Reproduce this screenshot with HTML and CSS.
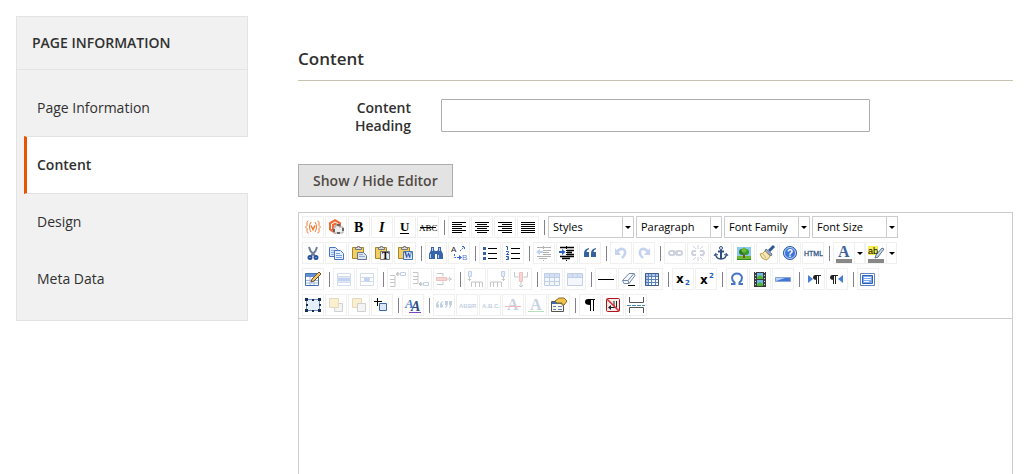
FILE: index.html
```html
<!DOCTYPE html>
<html lang="en">
<head>
    <meta charset="UTF-8">
    <meta name="viewport" content="width=device-width, initial-scale=1.0">
    <title>Page Information</title>
    <link rel="stylesheet" href="styles.css">
</head>
<body>

    <nav class="side">
        <h2 class="side-title">Page Information</h2>
        <ul class="side-list">
            <li><a class="side-link" href="#info">Page Information</a></li>
            <li><a class="side-link active" href="#content">Content</a></li>
            <li><a class="side-link" href="#design">Design</a></li>
            <li><a class="side-link" href="#meta">Meta Data</a></li>
        </ul>
    </nav>

    <main class="main" id="content">
        <h1 class="section-title">Content</h1>

        <div class="field">
            <label for="heading">Content Heading</label>
            <input type="text" id="heading" name="heading">
        </div>

        <button type="button" class="toggle">Show / Hide Editor</button>

        <div class="editor">
            <div class="toolbar">

                <!-- Row 1: text style, alignment, drop-downs -->
                <div class="row">
                    <button type="button" class="btn" title="Insert Variable"><svg viewBox="0 0 20 20" fill="none" stroke="#ee7a32"><path d="M5.500 4Q4 4 4 5.500v3L2.500 10 4 11.500v3Q4 16 5.500 16M14.500 4Q16 4 16 5.500v3l1.500 1.500-1.500 1.500v3q0 1.500-1.500 1.500M8 5Q6.500 7 6.500 10T8 15M12 5q1.500 2 1.500 5T12 15"/><path d="M8 8.500l2 4 2-4" stroke-width="1.500"/></svg></button>
                    <button type="button" class="btn" title="Insert Widget"><svg viewBox="0 0 20 20"><path d="M9 2l6 3.500v7L9 17l-6-4V5.500z" fill="#ee6a37"/><path d="M5.500 12V7L9 5l3.500 2M9 8v5" stroke="#fff" fill="none"/><path d="M8 10h2V8h3v2h4v6H8z" fill="#eee" stroke="#aaa"/><path d="M11 7h3v2h-3zM7 12h2v3H7zM16 11h2v3h-2zM11 15h3v2h-3z" fill="#6a6464"/></svg></button>
                    <button type="button" class="btn" title="Bold"><svg viewBox="0 0 20 20"><text class="serif" x="5" y="15" font-size="14" font-weight="bold">B</text></svg></button>
                    <button type="button" class="btn" title="Italic"><svg viewBox="0 0 20 20"><text class="serif" x="7" y="15" font-size="14" font-weight="bold" font-style="italic">I</text></svg></button>
                    <button type="button" class="btn" title="Underline"><svg viewBox="0 0 20 20"><text class="serif" x="5" y="14" font-size="13" font-weight="bold">U</text><path d="M5 16.500h9" stroke="#000"/></svg></button>
                    <button type="button" class="btn" title="Strikethrough"><svg viewBox="0 0 20 20"><text class="serif" x="1" y="14" font-size="9">ABC</text><path d="M2 10.500h16" stroke="#000"/></svg></button>
                    <span class="sep"></span>
                    <button type="button" class="btn" title="Align Left"><svg viewBox="0 0 20 20"><path d="M3 5.500h14M3 7.500h10M3 9.500h14M3 11.500h10M3 13.500h14M3 15.500h10" stroke="#000"/></svg></button>
                    <button type="button" class="btn" title="Align Center"><svg viewBox="0 0 20 20"><path d="M3 5.500h14M5 7.500h10M3 9.500h14M5 11.500h10M3 13.500h14M5 15.500h10" stroke="#000"/></svg></button>
                    <button type="button" class="btn" title="Align Right"><svg viewBox="0 0 20 20"><path d="M3 5.500h14M7 7.500h10M3 9.500h14M7 11.500h10M3 13.500h14M7 15.500h10" stroke="#000"/></svg></button>
                    <button type="button" class="btn" title="Align Full"><svg viewBox="0 0 20 20"><path d="M3 5.500h14M3 7.500h14M3 9.500h14M3 11.500h14M3 13.500h14M3 15.500h14" stroke="#000"/></svg></button>
                    <span class="sep"></span>
                    <label class="listbox"><select aria-label="Styles"><option>Styles</option></select><span class="arrow"></span></label>
                    <label class="listbox"><select aria-label="Paragraph"><option>Paragraph</option></select><span class="arrow"></span></label>
                    <label class="listbox"><select aria-label="Font Family"><option>Font Family</option></select><span class="arrow"></span></label>
                    <label class="listbox"><select aria-label="Font Size"><option>Font Size</option></select><span class="arrow"></span></label>
                </div>

                <!-- Row 2: clipboard, lists, links, colors -->
                <div class="row">
                    <button type="button" class="btn" title="Cut"><svg viewBox="0 0 20 20" fill="none"><path d="M6 4l1.500 4L12 13M14 4l-1.500 4L8 13" stroke="#6d7f99" stroke-width="2"/><circle cx="7" cy="14.500" r="1.500" stroke="#24509c" stroke-width="2"/><circle cx="13" cy="14.500" r="1.500" stroke="#24509c" stroke-width="2"/></svg></button>
                    <button type="button" class="btn" title="Copy"><svg viewBox="0 0 20 20" stroke="#4a74c4"><path d="M3.500 4.500h6l2 2v7h-8z" fill="#dce9fc"/><path d="M5 7.500h5M5 9.500h5M5 11.500h3" stroke="#8fb0e6"/><path d="M8.500 7.500h6l3 3v6h-9z" fill="#e8f1ff"/><path d="M10 10.500h4M10 12.500h6M10 14.500h6" stroke="#7aa0e0"/></svg></button>
                    <button type="button" class="btn" title="Paste"><svg viewBox="0 0 20 20"><path d="M3.500 4.500h11v11h-11z" fill="#f2cf63" stroke="#a98328"/><path d="M6.500 6.500v-2h2v-1h2v1h2v2z" fill="#ddd" stroke="#777"/><path d="M8.500 9.500h6l3 3v4h-9z" fill="#dce5f3" stroke="#64758f"/><path d="M10 11.500h4M10 13.500h6" stroke="#98a9c4"/></svg></button>
                    <button type="button" class="btn" title="Paste as Plain Text"><svg viewBox="0 0 20 20"><path d="M3.500 4.500h11v11h-11z" fill="#f2cf63" stroke="#a98328"/><path d="M6.500 6.500v-2h2v-1h2v1h2v2z" fill="#ddd" stroke="#777"/><path d="M8.500 8.500h9v8h-9z" fill="#eee" stroke="#777"/><text class="serif" x="10" y="16" font-size="10" font-weight="bold">T</text></svg></button>
                    <button type="button" class="btn" title="Paste from Word"><svg viewBox="0 0 20 20"><path d="M3.500 4.500h11v11h-11z" fill="#f2cf63" stroke="#a98328"/><path d="M6.500 6.500v-2h2v-1h2v1h2v2z" fill="#ddd" stroke="#777"/><path d="M8.500 8.500h9v8h-9z" fill="#dbe8fb" stroke="#4a74b4"/><text class="serif" x="9" y="15" font-size="8" font-weight="bold" fill="#1d4fa4">W</text></svg></button>
                    <span class="sep"></span>
                    <button type="button" class="btn" title="Find"><svg viewBox="0 0 20 20"><path d="M5 4h3v3l1 1h2l1-1V4h3v3l2 4v5h-6v-5H9v5H3v-5l2-4z" fill="#3765ac"/><path d="M4.500 11v4M6.500 5v3M12.500 12v3M13.500 5v3" stroke="#b9d2f7"/></svg></button>
                    <button type="button" class="btn" title="Replace"><svg viewBox="0 0 20 20"><text class="sans" x="2" y="9" font-size="8" fill="#222">A</text><text class="sans" x="13" y="17" font-size="8" fill="#5a86e0">B</text><path d="M5.500 11v3.500H10M11 8l4-4M13 3.500h2.500V6" fill="none" stroke="#3568d8" stroke-dasharray="2 1"/><path d="M10 12l3 2.500-3 2.500z" fill="#3568d8"/></svg></button>
                    <span class="sep"></span>
                    <button type="button" class="btn" title="Unordered List"><svg viewBox="0 0 20 20"><path d="M8 5.500h9M8 10.500h9M8 15.500h9" stroke="#000"/><path d="M3 4h3v3H3zM3 9h3v3H3zM3 14h3v3H3z" fill="#3a5f9f"/></svg></button>
                    <button type="button" class="btn" title="Ordered List"><svg viewBox="0 0 20 20"><path d="M8 5.500h9M8 10.500h9M8 15.500h9" stroke="#000"/><path d="M3 3.500h1.500V7M3 8.500h2.500v1L3.500 11.500H6M3 13.500h2.500v3H3M4 15h2" fill="none" stroke="#2a5ab8"/></svg></button>
                    <span class="sep"></span>
                    <button type="button" class="btn off" title="Outdent" disabled><svg viewBox="0 0 20 20"><path d="M3 4.500h14M10 7.500h7M10 9.500h5M10 11.500h7M3 13.500h14M5 15.500h8" stroke="#000"/><path d="M9.500 3v15" stroke="#000" stroke-dasharray="1 1"/><path d="M2 9l4-3v2h3v2H6v2z" fill="#3068d0"/></svg></button>
                    <button type="button" class="btn" title="Indent"><svg viewBox="0 0 20 20"><path d="M3 4.500h14M10 7.500h7M10 9.500h5M10 11.500h7M3 13.500h14M5 15.500h8" stroke="#000" stroke-width="1.500"/><path d="M9.500 3v15" stroke="#000" stroke-dasharray="1 1"/><path d="M8.500 9L5 6v2H2v2h3v2z" fill="#2a62c8"/></svg></button>
                    <button type="button" class="btn" title="Blockquote"><svg viewBox="0 0 20 20"><path d="M9 6Q6.500 7 6.500 9H9v5H4v-4Q4 6 9 5zM16 6q-2.500 1-2.500 3H16v5h-5v-4q0-4 5-5z" fill="#35639f"/></svg></button>
                    <span class="sep"></span>
                    <button type="button" class="btn off" title="Undo" disabled><svg viewBox="0 0 20 20"><path d="M6 9q3-4.500 7-2.500 3 4-2 8.500" fill="none" stroke="#3c70cf" stroke-width="2.500"/><path d="M4 5v7h6z" fill="#3c70cf"/></svg></button>
                    <button type="button" class="btn off" title="Redo" disabled><svg viewBox="0 0 20 20"><path d="M14 9Q11 4.500 7 6.500 4 10.500 9 15" fill="none" stroke="#3c70cf" stroke-width="2.500"/><path d="M16 5v7h-6z" fill="#3c70cf"/></svg></button>
                    <span class="sep"></span>
                    <button type="button" class="btn off" title="Insert Link" disabled><svg viewBox="0 0 20 20" fill="none" stroke="#5b6d94" stroke-width="2"><rect x="4" y="8" width="6" height="4" rx="2"/><rect x="11" y="8" width="6" height="4" rx="2"/><path d="M8 10h5"/></svg></button>
                    <button type="button" class="btn off" title="Unlink" disabled><svg viewBox="0 0 20 20" fill="none" stroke="#5b6d94"><path d="M8 8H5q-2 2 0 4h3M12 8h3q2 2 0 4h-3" stroke-width="2"/><path d="M10 2v4M10 14v4M5 3l3 3M15 3l-3 3M5 17l3-3M15 17l-3-3"/></svg></button>
                    <button type="button" class="btn" title="Anchor"><svg viewBox="0 0 20 20" fill="none" stroke="#304f80"><circle cx="10" cy="5" r="1.500"/><path d="M10 7v9M7 8.500h6" stroke-width="2"/><path d="M4.500 11q.5 5 5.500 5t5.500-5" stroke-width="1.500"/><path d="M3 13l1.500-2.500L7 12M17 13l-1.500-2.500L13 12"/></svg></button>
                    <button type="button" class="btn" title="Insert Image"><svg viewBox="0 0 20 20"><path d="M3 4h14v9H3z" fill="#8cc8f5"/><path d="M3 13h14v3H3z" fill="#69b82f"/><path d="M9 10h2v5H9z" fill="#805020"/><circle cx="8" cy="9" r="3" fill="#2f7d20"/><circle cx="12" cy="9" r="3" fill="#3b9a28"/><circle cx="10" cy="7" r="2.500" fill="#6bbd3b"/><path d="M3 16.500h14" stroke="#338b22"/></svg></button>
                    <button type="button" class="btn" title="Cleanup"><svg viewBox="0 0 20 20"><path d="M17 3l-5 5" stroke="#31579b" stroke-width="3"/><path d="M9 6l6 5-1 2-6-5z" fill="#9db2d4" stroke="#61769a"/><path d="M8 8l5 5q-1 3-4 4-5-1-6-6 3 0 5-3z" fill="#f6e6b4" stroke="#b99c4b"/><path d="M6 11l3 4" stroke="#d0b56c"/></svg></button>
                    <button type="button" class="btn" title="Help"><svg viewBox="0 0 20 20"><circle cx="10" cy="10" r="6.500" fill="#3d76d8" stroke="#2a58a8"/><circle cx="10" cy="10" r="5.500" fill="none" stroke="#bcd4fa"/><text class="sans" x="7" y="14" font-size="10" font-weight="bold" fill="#fff">?</text></svg></button>
                    <button type="button" class="btn" title="Edit HTML Source"><svg viewBox="0 0 20 20"><text class="sans" x="1" y="13" font-size="7" fill="#31588c" stroke="#31588c" stroke-width=".3">HTML</text></svg></button>
                    <span class="sep"></span>
                    <span class="split">
                        <button type="button" class="btn" title="Text Color"><svg viewBox="0 0 20 20"><text class="serif" x="4" y="14" font-size="16" font-weight="bold" fill="#3c629c">A</text><path d="M2 16h16v4H2z" fill="#888"/></svg></button>
                        <button type="button" class="arrow" title="Choose Text Color"></button>
                    </span>
                    <span class="split">
                        <button type="button" class="btn" title="Background Color"><svg viewBox="0 0 20 20"><path d="M2 3h10v9H2z" fill="#f7ee55"/><path d="M16 5l2 1-6 8-3 1 1-3z" fill="#cbd8ea" stroke="#5a7396"/><text class="sans" x="2" y="11" font-size="9">ab</text><path d="M2 16h16v4H2z" fill="#888"/></svg></button>
                        <button type="button" class="arrow" title="Choose Background Color"></button>
                    </span>
                </div>

                <!-- Row 3: tables, symbols, direction -->
                <div class="row">
                    <button type="button" class="btn" title="Insert Table"><svg viewBox="0 0 20 20"><path d="M2.500 4.500h13v12h-13z" fill="#fff" stroke="#4670b0"/><path d="M3 5h12v3H3z" fill="#648fd2"/><path d="M3 11.500h12M3 14h12M7 8v8M11 8v8" stroke="#9db8e2"/><path d="M16 3l2 2-7 7-3 1 1-3z" fill="#f0c56a" stroke="#765028"/></svg></button>
                    <span class="sep"></span>
                    <button type="button" class="btn off" title="Row Properties" disabled><svg viewBox="0 0 20 20" fill="none" stroke="#6e8fc8"><path d="M3.500 4.500h13v12h-13zM3 7.500h14M3 13.500h14"/><path d="M4 10.500h12" stroke="#3a6ed0" stroke-width="4"/></svg></button>
                    <button type="button" class="btn off" title="Cell Properties" disabled><svg viewBox="0 0 20 20" fill="none" stroke="#6e8fc8"><path d="M3.500 4.500h13v12h-13zM3 8.500h14M3 12.500h14M7.500 8v5M12.500 8v5"/><path d="M8 9h4v3H8z" fill="#3a6ed0" stroke="#3a6ed0"/></svg></button>
                    <span class="sep"></span>
                    <button type="button" class="btn off" title="Insert Row Before" disabled><svg viewBox="0 0 20 20" fill="none" stroke="#444"><path d="M2 6.500h5v4H2M2 10.500h5v3H2M2 13.500h5v4H2M8 5h4"/><path d="M12.500 3.500h5v3h-5z" stroke="#3568b8"/><path d="M8 5l2-2v4z" fill="#444"/></svg></button>
                    <button type="button" class="btn off" title="Insert Row After" disabled><svg viewBox="0 0 20 20" fill="none" stroke="#444"><path d="M2 3.500h5v4H2M2 7.500h5v3H2M2 10.500h5v4H2M8 15h4"/><path d="M12.500 13.500h5v3h-5z" stroke="#3568b8"/><path d="M8 15l2-2v4z" fill="#444"/></svg></button>
                    <button type="button" class="btn off" title="Delete Row" disabled><svg viewBox="0 0 20 20" fill="none" stroke="#444"><path d="M3 4.500h6v3M3 15.500h6v-3M12 10h6M15 8l2 2-2 2"/><path d="M2.500 8.500h10v3h-10z" fill="#f07878" stroke="#c33"/></svg></button>
                    <span class="sep"></span>
                    <button type="button" class="btn off" title="Insert Column Before" disabled><svg viewBox="0 0 20 20" fill="none" stroke="#444"><path d="M6.500 18v-5h11v5M10.500 13v5M14.500 13v5M4.500 8v4M3 10.500h3"/><path d="M3.500 2.500h3v5h-3z" fill="#aac6f2" stroke="#3568b8"/></svg></button>
                    <button type="button" class="btn off" title="Insert Column After" disabled><svg viewBox="0 0 20 20" fill="none" stroke="#444"><path d="M2.500 18v-5h11v5M5.500 13v5M9.500 13v5M15.500 8v4M14 10.500h3"/><path d="M13.500 2.500h3v5h-3z" fill="#aac6f2" stroke="#3568b8"/></svg></button>
                    <button type="button" class="btn off" title="Delete Column" disabled><svg viewBox="0 0 20 20" fill="none" stroke="#444"><path d="M3.500 3v5h4M16.500 3v5h-4M10 13v5M8 16l2 2 2-2"/><path d="M8.500 3.500h3v9h-3z" fill="#f07878" stroke="#c33"/></svg></button>
                    <span class="sep"></span>
                    <button type="button" class="btn off" title="Split Cells" disabled><svg viewBox="0 0 20 20"><path d="M2.500 4.500h15v12h-15z" fill="#dce8fb" stroke="#3865ad"/><path d="M3 5h14v3H3z" fill="#6f98dc"/><path d="M3 8.500h14M3 12.500h14M7.500 5v11M12.500 5v11" stroke="#3865ad"/></svg></button>
                    <button type="button" class="btn off" title="Merge Cells" disabled><svg viewBox="0 0 20 20"><path d="M2.500 4.500h15v12h-15z" fill="#dce8fb" stroke="#3865ad"/><path d="M3 5h14v3H3z" fill="#6f98dc"/><path d="M3 8.500h14M7.500 5v3M12.500 5v3" stroke="#3865ad"/></svg></button>
                    <span class="sep"></span>
                    <button type="button" class="btn" title="Horizontal Line"><svg viewBox="0 0 20 20"><path d="M2 10.500h16" stroke="#000"/></svg></button>
                    <button type="button" class="btn" title="Remove Formatting"><svg viewBox="0 0 20 20"><path d="M10 4.500h5l1 2-6 8H5l-1.500-3z" fill="#f5f8ff" stroke="#7186ad"/><path d="M4 11.500h5l6-7M9 11.500l1 3" fill="none" stroke="#7186ad"/><path d="M9 16.500h7" stroke="#000"/></svg></button>
                    <button type="button" class="btn" title="Toggle Guidelines"><svg viewBox="0 0 20 20"><path d="M3 4h14v13H3z" fill="#f4f8ff"/><path d="M3 4h14v3H3zM3 4h3v13H3z" fill="#a9c3ec"/><path d="M6.500 4v13M9.500 4v13M13.500 4v13M3 7.500h14M3 10.500h14M3 13.500h14" stroke="#5c80ba"/><path d="M3.500 4.500h13v12h-13z" fill="none" stroke="#3d5a8c"/></svg></button>
                    <span class="sep"></span>
                    <button type="button" class="btn" title="Subscript"><svg viewBox="0 0 20 20"><text class="dejavu" x="3" y="14" font-size="12" font-weight="bold">x</text><text class="dejavu" x="12" y="16" font-size="7" font-weight="bold" fill="#2a5cb8">2</text></svg></button>
                    <button type="button" class="btn" title="Superscript"><svg viewBox="0 0 20 20"><text class="dejavu" x="4" y="15" font-size="12" font-weight="bold">x</text><text class="dejavu" x="13" y="9" font-size="7" font-weight="bold" fill="#2a5cb8">2</text></svg></button>
                    <span class="sep"></span>
                    <button type="button" class="btn" title="Insert Custom Character"><svg viewBox="0 0 20 20"><path d="M4 15h3.500v-1.500Q5 11.500 5 8.500 6 4.500 10 4.500T15 8.500q0 3-2.500 5V15H16" fill="none" stroke="#4676cb" stroke-width="2"/></svg></button>
                    <button type="button" class="btn" title="Insert Media"><svg viewBox="0 0 20 20"><path d="M4 3h12v15H4z" fill="#3b3b3b"/><path d="M7 4h6v6H7zM7 11h6v6H7z" fill="#6fb8e9"/><path d="M7 8l3-2 3 2v2H7zM7 15l3-2 3 2v2H7z" fill="#4eb535"/><path d="M5.500 3v15M14.500 3v15" stroke="#ddd" stroke-dasharray="1 2"/></svg></button>
                    <button type="button" class="btn" title="Insert Horizontal Rule"><svg viewBox="0 0 20 20"><path d="M2.500 8.500h15v4h-15z" fill="#4478d4" stroke="#8ba6d4"/><path d="M3 12l9-3H3z" fill="#b5d0ff"/></svg></button>
                    <span class="sep"></span>
                    <button type="button" class="btn" title="Left to Right"><svg viewBox="0 0 20 20"><path d="M4 6l5 4-5 4z" fill="#477dd4"/><path d="M13 6h-2Q9 6 9 8.500t4 2.500z" fill="#222"/><path d="M12.500 6v9M14.500 6v9M11 6.500h6" stroke="#222"/></svg></button>
                    <button type="button" class="btn" title="Right to Left"><svg viewBox="0 0 20 20"><path d="M16 6l-5 4 5 4z" fill="#477dd4"/><path d="M7 6H5Q3 6 3 8.500T7 11z" fill="#222"/><path d="M6.500 6v9M8.500 6v9M5 6.500h6" stroke="#222"/></svg></button>
                    <span class="sep"></span>
                    <button type="button" class="btn" title="Fullscreen"><svg viewBox="0 0 20 20"><path d="M2.500 4.500h14v12h-14z" fill="#fff" stroke="#5c83c8"/><path d="M4.500 6.500h10v8h-10z" fill="#7ba7ef" stroke="#2f61b5"/><path d="M6 8.500h7M6 10.500h7M6 12.500h5" stroke="#fff"/></svg></button>
                </div>

                <!-- Row 4: layers, semantic markup, page break -->
                <div class="row">
                    <button type="button" class="btn" title="Insert Layer"><svg viewBox="0 0 20 20"><path d="M3.500 4.500h13v11h-13z" fill="#e4edfa" stroke="#6d8fc4"/><path d="M2 3h3v3H2zM9 4h2v2H9zM15 3h3v3h-3zM3 9h2v2H3zM16 9h2v2h-2zM2 14h3v3H2zM9 15h2v2H9zM15 14h3v3h-3z" fill="#182c4c"/></svg></button>
                    <button type="button" class="btn off" title="Move Forward" disabled><svg viewBox="0 0 20 20"><path d="M8.500 8.500h8v8h-8z" fill="#ddd" stroke="#666"/><path d="M3.500 3.500h9v9h-9z" fill="#f1cd62" stroke="#a98328"/></svg></button>
                    <button type="button" class="btn off" title="Move Backward" disabled><svg viewBox="0 0 20 20"><path d="M3.500 3.500h9v9h-9z" fill="#f1cd62" stroke="#a98328"/><path d="M8.500 8.500h8v8h-8z" fill="#ddd" stroke="#666"/></svg></button>
                    <button type="button" class="btn" title="Toggle Absolute Positioning"><svg viewBox="0 0 20 20"><path d="M7.500 8.500h7v7h-7z" fill="#dce8fa" stroke="#3c69ae"/><path d="M2 6.500h8M5.500 3v8" stroke="#000"/></svg></button>
                    <span class="sep"></span>
                    <button type="button" class="btn" title="Edit CSS Style"><svg viewBox="0 0 20 20"><text class="serif" x="2" y="13" font-size="13" font-weight="bold" font-style="italic" fill="#477bca">A</text><text class="serif" x="8" y="16" font-size="14" font-weight="bold" font-style="italic" fill="#304c82">A</text><path d="M6 17.500h12" stroke="#7b45c0"/></svg></button>
                    <span class="sep"></span>
                    <button type="button" class="btn off" title="Citation" disabled><svg viewBox="0 0 20 20" fill="#35639f"><path d="M5 7Q3.500 8 4 9.500h1v3H2V9q.5-2 3-3zM9 7Q7.500 8 8 9.500h1v3H6V9q.5-2 3-3zM11 6h3v3q-.5 3-3 4v-1q1.500-1 1-2h-1zM15 6h3v3q-.5 3-3 4v-1q1.500-1 1-2h-1z"/></svg></button>
                    <button type="button" class="btn off" title="Abbreviation" disabled><svg viewBox="0 0 20 20"><text class="sans" x="2" y="13" font-size="6" font-weight="bold" fill="#35639f">ABBR</text></svg></button>
                    <button type="button" class="btn off" title="Acronym" disabled><svg viewBox="0 0 20 20"><text class="sans" x="2" y="13" font-size="6" font-weight="bold" fill="#35639f">A.B.C.</text></svg></button>
                    <button type="button" class="btn off" title="Deletion" disabled><svg viewBox="0 0 20 20"><text class="serif" x="4" y="15" font-size="16" font-weight="bold" fill="#4a6c9f">A</text><path d="M2 11.500h16" stroke="#e02020"/></svg></button>
                    <button type="button" class="btn off" title="Insertion" disabled><svg viewBox="0 0 20 20"><text class="serif" x="4" y="15" font-size="16" font-weight="bold" fill="#4a6c9f">A</text><path d="M2 16.500h16" stroke="#159a25"/></svg></button>
                    <button type="button" class="btn" title="Insert/Edit Attributes"><svg viewBox="0 0 20 20"><path d="M2.500 6.500h12v10h-12z" fill="#f8f8f3" stroke="#555"/><path d="M3 8h11" stroke="#416db5" stroke-width="2"/><path d="M4 11.500h3M9 11.500h4M4 14.500h3M9 14.500h4" stroke="#6585b0"/><path d="M6 6l4-3h5l3 3-3 4h-2V8H8z" fill="#f0c34b" stroke="#8f681f"/></svg></button>
                    <span class="sep"></span>
                    <button type="button" class="btn" title="Show Invisible Characters"><svg viewBox="0 0 20 20"><path d="M11 4H8Q5 4 5 7t5 3z" fill="#000"/><path d="M10.500 4v12M13.500 4v12M8 4.500h7" stroke="#000"/></svg></button>
                    <button type="button" class="btn" title="Insert Non-Breaking Space"><svg viewBox="0 0 20 20"><rect x="3.500" y="3.500" width="13" height="13" rx="1" fill="#f1ecec" stroke="#b3141b"/><path d="M7 12.500h6.500V6M11 6v5" fill="none" stroke="#222"/><path d="M5 12.500L8 10v5z" fill="#222"/><path d="M4 4l12 12" stroke="#dc2c33" stroke-width="1.500"/></svg></button>
                    <button type="button" class="btn" title="Insert Page Break"><svg viewBox="0 0 20 20" fill="none" stroke="#555"><path d="M3.500 2v5.500h14V2M3.500 18v-5.500h14V18"/><path d="M1 10.500h18" stroke="#4c8cae" stroke-dasharray="4 1"/></svg></button>
                </div>
            </div>
            <textarea class="editor-text" aria-label="Content"></textarea>
        </div>
    </main>

</body>
</html>
```
FILE: styles.css
```css
* {
    box-sizing: border-box;
}
body {
    display: flex;
    gap: 50px;
    min-height: 100vh;
    margin: 0;
    padding: 16px 13px 0 16px;
    font-family: "Open Sans", sans-serif;
    font-size: 14px;
    line-height: 18px;
    color: #303030;
    background-color: #ffffff;
}

/* Left navigation */
.side {
    flex: none;
    align-self: flex-start;
    width: 232px;
    border: 1px solid #e3e3e3;
    background-color: #f1f1f1;
}
.side-title {
    margin: 0;
    padding: 17px 15px;
    border-bottom: 1px solid #e3e3e3;
    font-size: 14px;
    font-weight: 600;
    text-transform: uppercase;
}
.side-list {
    list-style: none;
    margin: 0;
    padding: 9px 0 13px 7px;
}
.side-link {
    display: block;
    padding: 20px 10px 19px;
    border-left: 3px solid transparent;
    color: #303030;
    text-decoration: none;
}
.side-link.active {
    margin: 0 -1px -1px 0;
    padding-top: 19px;
    border-top: 1px solid #e3e3e3;
    border-bottom: 1px solid #e3e3e3;
    border-left-color: #eb5202;
    background-color: #ffffff;
    font-weight: 600;
}

/* Content section */
.main {
    display: flex;
    flex: 1;
    flex-direction: column;
    align-items: flex-start;
    min-width: 0;
}
.section-title {
    width: 100%;
    margin: 0 0 18px;
    padding: 31px 0 10px;
    border-bottom: 1px solid #cac3b4;
    font-size: 17px;
    font-weight: 600;
    line-height: 23px;
}
.field {
    display: grid;
    grid-template-columns: 113px 60%;
    gap: 30px;
    width: 100%;
    margin-bottom: 29px;
}
.field label {
    padding-left: 40px;
    font-weight: 600;
    text-align: right;
}
.field input {
    height: 33px;
    padding: 0 10px;
    border: 1px solid #adadad;
    border-radius: 1px;
    font: inherit;
}
.toggle {
    height: 33px;
    margin-bottom: 15px;
    padding: 0 14px;
    border: 1px solid #adadad;
    background-color: #e3e3e3;
    color: #514943;
    font: inherit;
    font-weight: 600;
}

/* Editor */
.editor {
    display: flex;
    flex: 1;
    flex-direction: column;
    width: 100%;
    border: 1px solid #cccccc;
    border-bottom: none;
}
.toolbar {
    padding: 3px 3px 2px;
    border-bottom: 1px solid #cccccc;
}
.row {
    display: flex;
    height: 22px;
    margin-bottom: 4px;
}
.row:last-child {
    margin-bottom: 0;
}
.btn {
    flex: none;
    width: 22px;
    height: 22px;
    margin-right: 1px;
    padding: 0;
    border: 1px solid #f0f0ee;
    background: none;
}
.btn svg {
    display: block;
    width: 20px;
    height: 20px;
}
.off svg {
    opacity: 0.3;
}
.serif {
    font-family: "Liberation Serif", serif;
}
.sans {
    font-family: "Liberation Sans", sans-serif;
}
.dejavu {
    font-family: "DejaVu Sans", sans-serif;
}
.sep {
    width: 1px;
    height: 15px;
    margin: 4px 3px 0 4px;
    background-color: #85818c;
}
.listbox {
    display: flex;
    width: 86px;
    margin-right: 2px;
    border: 1px solid #cccccc;
}
.listbox select {
    flex: 1;
    min-width: 0;
    padding: 0 4px 2px;
    border: none;
    appearance: none;
    background: none;
    color: #000000;
    font-family: "Open Sans", sans-serif;
    font-size: 11px;
}
.arrow {
    display: flex;
    align-items: center;
    justify-content: center;
    width: 10px;
    padding: 0;
    border: 0 solid #cccccc;
    border-left-width: 1px;
    background: none;
}
.listbox .arrow {
    width: 11px;
}
.arrow::after {
    content: "";
    border: 3px solid transparent;
    border-top-color: #000000;
    border-bottom: none;
}
.split {
    display: flex;
}
.split .btn {
    margin-right: 0;
}
.split .arrow {
    border: 1px solid #f0f0ee;
    border-left: none;
}
.editor-text {
    flex: 1;
    width: 100%;
    min-height: 155px;
    padding: 8px;
    border: none;
    resize: none;
    font: inherit;
}
```
